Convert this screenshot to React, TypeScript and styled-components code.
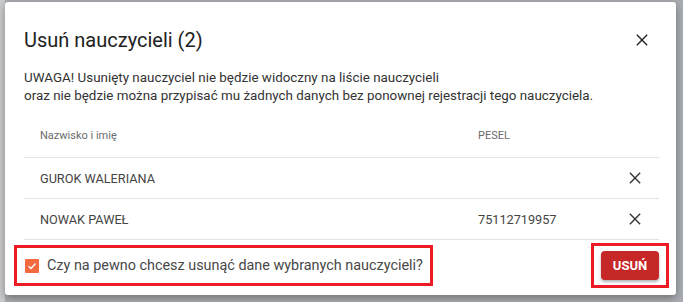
import styled, { createGlobalStyle } from "styled-components";

const GlobalStyle = createGlobalStyle`
	html, body {
		margin: 0;
		padding: 0;
		background: #a3a7ab;
		font-family: Roboto, "Noto Sans", sans-serif;
	}
`;

const Page = styled.div`
	width: 683px;
	height: 302px;
	box-sizing: border-box;
	padding: 2px 0 0 5px;
	background: linear-gradient(to right, #c9cbcd 0px, #c9cbcd 5px, #a9adb1 5px);
	overflow: hidden;
`;

const Dialog = styled.div`
	box-sizing: border-box;
	width: 671px;
	height: 293px;
	background: #ffffff;
	border-radius: 3px;
	box-shadow: 0 3px 8px rgba(0, 0, 0, 0.35);
	display: flex;
	flex-direction: column;
	padding: 22px 17px 0 19px;
`;

const Header = styled.div`
	display: flex;
	align-items: center;
	justify-content: space-between;
	height: 32px;
`;

const Title = styled.h2`
	margin: 0;
	font-size: 20px;
	font-weight: 400;
	color: #212121;
`;

const IconButton = styled.button`
	border: none;
	background: transparent;
	padding: 0;
	width: 28px;
	height: 28px;
	display: flex;
	align-items: center;
	justify-content: center;
	color: #222;
	cursor: pointer;
	margin-right: 3px;
`;

const Warning = styled.p`
	margin: 13px 0 0 0;
	font-size: 13.4px;
	line-height: 18px;
	color: #333;
`;

const Table = styled.div`
	margin-top: 8px;
	display: flex;
	flex-direction: column;
`;

const Row = styled.div<{ head?: boolean }>`
	display: grid;
	grid-template-columns: 438px 1fr 38px;
	align-items: center;
	height: ${(p) => (p.head ? "44px" : "40px")};
	border-bottom: 1px solid #e3e3e3;
	padding-left: 16px;
	font-size: ${(p) => (p.head ? "11px" : "12.7px")};
	color: ${(p) => (p.head ? "#6b6b6b" : "#444")};
`;

const Cell = styled.div``;

const Footer = styled.div`
	flex: 1;
	display: flex;
	align-items: center;
	justify-content: space-between;
	margin-left: -10px;
	margin-right: -10px;
	padding-bottom: 4px;
`;

const Marked = styled.div<{ padX: number; padY: number }>`
	border: 3px solid #ed1c24;
	padding: ${(p) => `${p.padY}px ${p.padX}px`};
	display: flex;
	align-items: center;
`;

const CheckLabel = styled.label`
	display: flex;
	align-items: center;
	gap: 8px;
	font-size: 14.4px;
	color: #484848;
	width: 397px;
	white-space: nowrap;
`;

const Box = styled.span`
	flex: none;
	width: 14px;
	height: 14px;
	background: #f26a3d;
	border-radius: 1px;
	display: flex;
	align-items: center;
	justify-content: center;
`;

const DangerButton = styled.button`
	border: none;
	background: #c62828;
	color: #fff;
	font-family: Roboto, sans-serif;
	font-weight: 700;
	font-size: 13px;
	width: 58px;
	height: 29px;
	border-radius: 4px;
	box-shadow: 0 2px 3px rgba(0, 0, 0, 0.3);
	cursor: pointer;
`;

const Cross = ({ size }: { size: number }) => (
	<svg width={size} height={size} viewBox="0 0 14 14" fill="none">
		<path d="M1 1L13 13M13 1L1 13" stroke="currentColor" strokeWidth="1.6" />
	</svg>
);

const RowClose = styled(IconButton)`
	margin: 0;
	color: #333;
`;

const teachers = [
	{ name: "GUROK WALERIANA", pesel: "" },
	{ name: "NOWAK PAWEŁ", pesel: "75112719957" },
];

export default function App() {
	return (
		<>
			<GlobalStyle />
			<Page>
				<Dialog>
					<Header>
						<Title>Usuń nauczycieli (2)</Title>
						<IconButton>
							<Cross size={12} />
						</IconButton>
					</Header>
					<Warning>
						UWAGA! Usunięty nauczyciel nie będzie widoczny na liście nauczycieli
						<br />
						oraz nie będzie można przypisać mu żadnych danych bez ponownej
						rejestracji tego nauczyciela.
					</Warning>
					<Table>
						<Row head>
							<Cell>Nazwisko i imię</Cell>
							<Cell>PESEL</Cell>
							<Cell />
						</Row>
						{teachers.map((t) => (
							<Row key={t.name}>
								<Cell>{t.name}</Cell>
								<Cell>{t.pesel}</Cell>
								<RowClose>
									<Cross size={12} />
								</RowClose>
							</Row>
						))}
					</Table>
					<Footer>
						<Marked padX={8} padY={9}>
							<CheckLabel>
								<Box>
									<svg width="10" height="10" viewBox="0 0 10 10" fill="none">
										<path d="M1.5 5.2L4 7.5L8.5 2.5" stroke="#fff" strokeWidth="1.4" />
									</svg>
								</Box>
								Czy na pewno chcesz usunąć dane wybranych nauczycieli?
							</CheckLabel>
						</Marked>
						<Marked padX={7} padY={5}>
							<DangerButton>USUŃ</DangerButton>
						</Marked>
					</Footer>
				</Dialog>
			</Page>
		</>
	);
}
